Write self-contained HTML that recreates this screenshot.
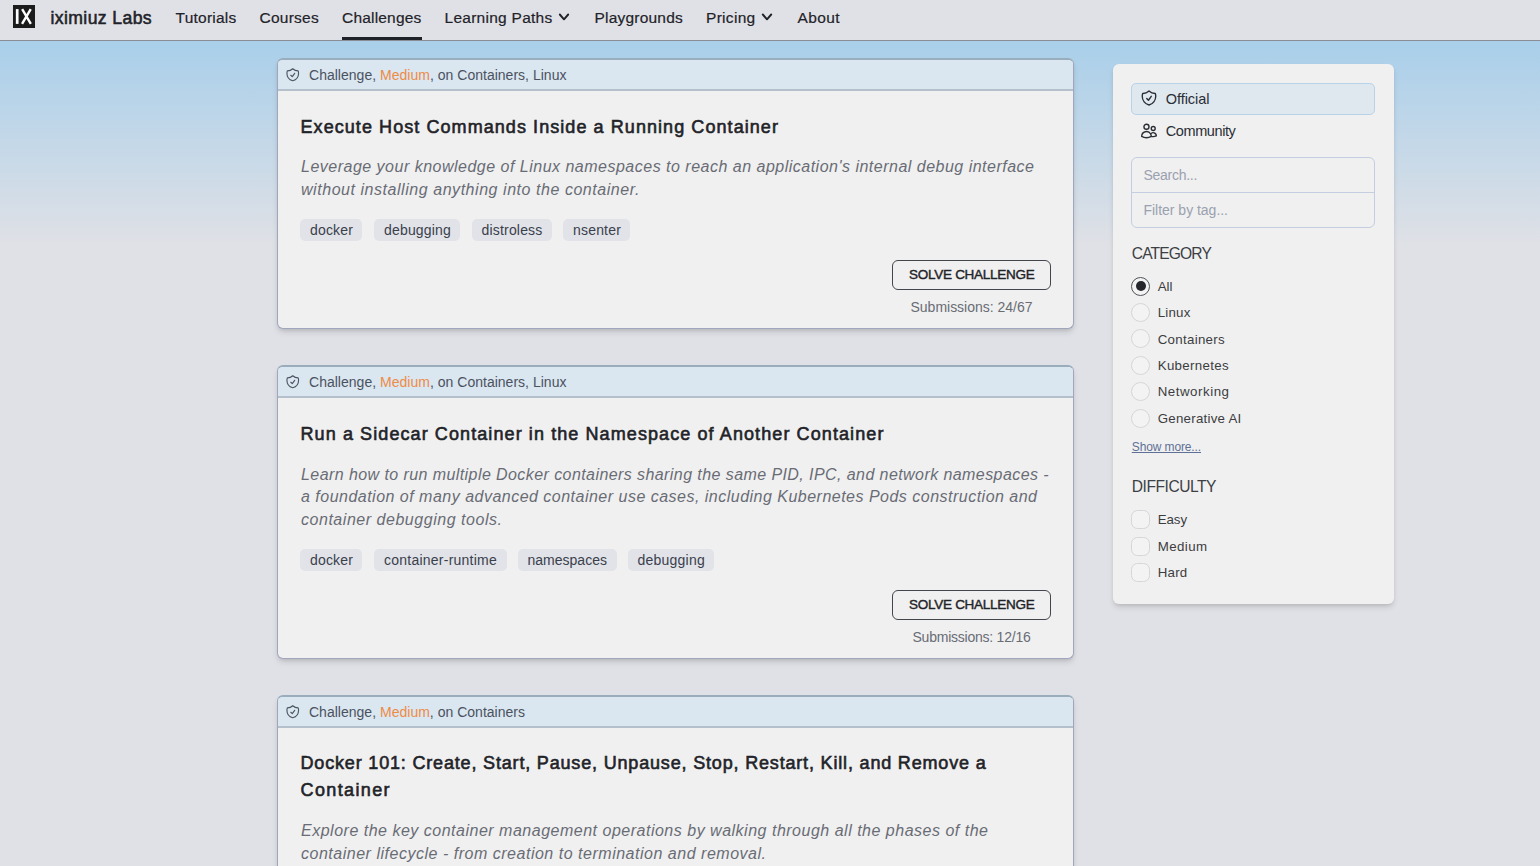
<!DOCTYPE html>
<html><head><meta charset="utf-8"><title>Challenges - iximiuz Labs</title>
<style>
html,body{margin:0;padding:0}
body{width:1540px;height:866px;overflow:hidden;position:relative;font-family:"Liberation Sans",sans-serif;
background:#e0e1e6;}
.bg{position:absolute;left:0;top:41px;width:1540px;height:207px;background:linear-gradient(to bottom,#a9cfea 0%,#e0e1e6 100%)}
.nav{position:absolute;left:0;top:0;width:1540px;height:40px;background:#e0e1e6;border-bottom:1px solid #8a8d94}
.t{position:absolute;white-space:nowrap;display:block}
.logo{position:absolute;left:13px;top:6px;width:22px;height:22px;background:#1c1c1c}
.ul{position:absolute;left:342px;top:37px;width:80px;height:3px;background:#1f2329}
.card{position:absolute;box-sizing:border-box;left:277px;width:797px;border:1px solid #a0a6bc;border-top:2px solid #9aadbd;border-radius:6px;background:#f0f0f0;box-shadow:0 4px 6px -1px rgba(0,0,0,.13),0 2px 4px -2px rgba(0,0,0,.13);overflow:hidden}
.card .hd{position:absolute;left:0;top:0;width:100%;height:29px;background:#dae6f0;border-bottom:2px solid #b4c0cb}
.tag{position:absolute;height:22.500px;background:#e1e3e9;border-radius:5px}
.btn{position:absolute;left:892px;width:157px;height:28px;border:1px solid #43464d;border-radius:6px;background:#f0f0f0}
.side{position:absolute;left:1113px;top:64px;width:280.500px;height:540px;background:#f0f0f0;border-radius:6px;box-shadow:0 4px 6px -1px rgba(0,0,0,.13),0 2px 4px -2px rgba(0,0,0,.13)}
.off{position:absolute;left:1131px;top:83px;width:242px;height:30px;background:#dfe7ef;border:1px solid #b7d3ea;border-radius:5px}
.sb{position:absolute;left:1131px;top:157px;width:242px;height:69px;border:1px solid #c4cee0;border-radius:6px}
.sb i{position:absolute;left:0;top:34px;width:100%;height:1px;background:#c4cee0}
.rd{position:absolute;left:1131px;width:17px;height:17px;border:1px solid #d5d6d9;border-radius:50%;background:#f3f3f4}
.rd.on{border-color:#505358}
.rd.on:after{content:"";position:absolute;left:3.500px;top:3.500px;width:10px;height:10px;border-radius:50%;background:#25272c}
.cb{position:absolute;left:1131px;width:17px;height:17px;border:1px solid #d5d6d9;border-radius:6.500px;background:#f3f3f4}
svg{position:absolute;overflow:visible}
</style></head><body>
<div class="bg"></div><div class="nav"></div><div class="ul"></div>
<svg style="left:13px;top:5px" width="22" height="23" viewBox="0 0 22 23"><rect width="22" height="23" fill="#1b1b1b"/><rect x="2.850" y="4.100" width="2.700" height="14.800" fill="#fff"/><path d="M9.150 4.100L17.850 18.900M17.750 4.100L9.050 18.900" stroke="#fff" stroke-width="2.400" fill="none"/></svg>
<svg style="left:557.6px;top:12.9px" width="12" height="8" viewBox="0 0 12 8"><path d="M1.800 1.500L6 6.300l4.200-4.800" fill="none" stroke="#1f2329" stroke-width="1.900" stroke-linecap="round" stroke-linejoin="round"/></svg>
<svg style="left:761.2px;top:12.9px" width="12" height="8" viewBox="0 0 12 8"><path d="M1.800 1.500L6 6.300l4.200-4.800" fill="none" stroke="#1f2329" stroke-width="1.900" stroke-linecap="round" stroke-linejoin="round"/></svg>
<div class="card" style="top:58px;height:271px"><div class="hd"></div></div>
<svg style="left:285.2px;top:67.2px" width="15.5" height="15.5" viewBox="0 0 24 24"><path d="M9 12.750L11.250 15 15 9.750m-3-7.036A11.959 11.959 0 013.598 6 11.990 11.990 0 003 9.749c0 5.592 3.824 10.290 9 11.623 5.176-1.332 9-6.030 9-11.622 0-1.310-.210-2.571-.598-3.751h-.152c-3.196 0-6.100-1.248-8.250-3.285z" fill="none" stroke="#4b5361" stroke-width="1.75" stroke-linecap="round" stroke-linejoin="round"/></svg>
<div class="card" style="top:365px;height:294px"><div class="hd"></div></div>
<svg style="left:285.2px;top:374.2px" width="15.5" height="15.5" viewBox="0 0 24 24"><path d="M9 12.750L11.250 15 15 9.750m-3-7.036A11.959 11.959 0 013.598 6 11.990 11.990 0 003 9.749c0 5.592 3.824 10.290 9 11.623 5.176-1.332 9-6.030 9-11.622 0-1.310-.210-2.571-.598-3.751h-.152c-3.196 0-6.100-1.248-8.250-3.285z" fill="none" stroke="#4b5361" stroke-width="1.75" stroke-linecap="round" stroke-linejoin="round"/></svg>
<div class="card" style="top:695px;height:200px"><div class="hd"></div></div>
<svg style="left:285.2px;top:704.2px" width="15.5" height="15.5" viewBox="0 0 24 24"><path d="M9 12.750L11.250 15 15 9.750m-3-7.036A11.959 11.959 0 013.598 6 11.990 11.990 0 003 9.749c0 5.592 3.824 10.290 9 11.623 5.176-1.332 9-6.030 9-11.622 0-1.310-.210-2.571-.598-3.751h-.152c-3.196 0-6.100-1.248-8.250-3.285z" fill="none" stroke="#4b5361" stroke-width="1.75" stroke-linecap="round" stroke-linejoin="round"/></svg>
<div class="tag" style="left:300px;top:218.5px;width:62px"></div>
<div class="tag" style="left:374px;top:218.5px;width:86px"></div>
<div class="tag" style="left:472px;top:218.5px;width:79.5px"></div>
<div class="tag" style="left:563px;top:218.5px;width:67px"></div>
<div class="tag" style="left:300px;top:548.5px;width:62px"></div>
<div class="tag" style="left:374px;top:548.5px;width:132.5px"></div>
<div class="tag" style="left:518px;top:548.5px;width:98.5px"></div>
<div class="tag" style="left:627.5px;top:548.5px;width:86.5px"></div>
<div class="btn" style="top:260px"></div><div class="btn" style="top:590px"></div>
<div class="side"></div><div class="off"></div><div class="sb"><i></i></div>
<svg style="left:1139.6px;top:89.3px" width="18" height="18" viewBox="0 0 24 24"><path d="M9 12.750L11.250 15 15 9.750m-3-7.036A11.959 11.959 0 013.598 6 11.990 11.990 0 003 9.749c0 5.592 3.824 10.290 9 11.623 5.176-1.332 9-6.030 9-11.622 0-1.310-.210-2.571-.598-3.751h-.152c-3.196 0-6.100-1.248-8.250-3.285z" fill="none" stroke="#2a2e35" stroke-width="1.85" stroke-linecap="round" stroke-linejoin="round"/></svg>
<svg style="left:1139.700px;top:122.100px" width="18" height="18" viewBox="0 0 24 24" fill="none" stroke="#2a2e35" stroke-width="1.850" stroke-linecap="round" stroke-linejoin="round"><path d="M15 19.128a9.380 9.380 0 002.625.372 9.337 9.337 0 004.121-.952 4.125 4.125 0 00-7.533-2.493M15 19.128v-.003c0-1.113-.285-2.160-.786-3.070M15 19.128v.106A12.318 12.318 0 018.624 21c-2.331 0-4.512-.645-6.374-1.766l-.001-.109a6.375 6.375 0 0111.964-3.070M12 6.375a3.375 3.375 0 11-6.750 0 3.375 3.375 0 016.750 0zm8.250 2.250a2.625 2.625 0 11-5.250 0 2.625 2.625 0 015.250 0z"/></svg>
<div class="rd on" style="top:276.5px"></div>
<div class="rd" style="top:302.9px"></div>
<div class="rd" style="top:329.3px"></div>
<div class="rd" style="top:355.7px"></div>
<div class="rd" style="top:382.1px"></div>
<div class="rd" style="top:408.5px"></div>
<div class="cb" style="top:510.0px"></div>
<div class="cb" style="top:536.5px"></div>
<div class="cb" style="top:562.9px"></div>
<span class="t" style="left:50.5px;top:6.00px;font-size:17.6px;line-height:25px;color:#1f2329;font-weight:400;font-style:normal;letter-spacing:0.391px;-webkit-text-stroke:0.550px #1f2329;">iximiuz Labs</span>
<span class="t" style="left:175.5px;top:6.50px;font-size:15.5px;line-height:22px;color:#1f2329;font-weight:400;font-style:normal;letter-spacing:0.238px;-webkit-text-stroke:0.200px #1f2329;">Tutorials</span>
<span class="t" style="left:259.5px;top:6.50px;font-size:15.5px;line-height:22px;color:#1f2329;font-weight:400;font-style:normal;letter-spacing:0.254px;-webkit-text-stroke:0.200px #1f2329;">Courses</span>
<span class="t" style="left:342px;top:6.50px;font-size:15.5px;line-height:22px;color:#1f2329;font-weight:400;font-style:normal;letter-spacing:0.194px;-webkit-text-stroke:0.200px #1f2329;">Challenges</span>
<span class="t" style="left:444.5px;top:6.50px;font-size:15.5px;line-height:22px;color:#1f2329;font-weight:400;font-style:normal;letter-spacing:0.266px;-webkit-text-stroke:0.200px #1f2329;">Learning Paths</span>
<span class="t" style="left:594.5px;top:6.50px;font-size:15.5px;line-height:22px;color:#1f2329;font-weight:400;font-style:normal;letter-spacing:0.212px;-webkit-text-stroke:0.200px #1f2329;">Playgrounds</span>
<span class="t" style="left:706px;top:6.50px;font-size:15.5px;line-height:22px;color:#1f2329;font-weight:400;font-style:normal;letter-spacing:0.301px;-webkit-text-stroke:0.200px #1f2329;">Pricing</span>
<span class="t" style="left:797.5px;top:6.50px;font-size:15.5px;line-height:22px;color:#1f2329;font-weight:400;font-style:normal;letter-spacing:0.397px;-webkit-text-stroke:0.200px #1f2329;">About</span>
<span class="t" style="left:309px;top:65.00px;font-size:14px;line-height:20px;color:#4a5260;font-weight:400;font-style:normal;letter-spacing:0.017px;">Challenge, <span style="color:#ee8b45">Medium</span>, on Containers, Linux</span>
<span class="t" style="left:309px;top:372.00px;font-size:14px;line-height:20px;color:#4a5260;font-weight:400;font-style:normal;letter-spacing:0.017px;">Challenge, <span style="color:#ee8b45">Medium</span>, on Containers, Linux</span>
<span class="t" style="left:309px;top:702.00px;font-size:14px;line-height:20px;color:#4a5260;font-weight:400;font-style:normal;letter-spacing:0.013px;">Challenge, <span style="color:#ee8b45">Medium</span>, on Containers</span>
<span class="t" style="left:300.5px;top:114.50px;font-size:18px;line-height:25px;color:#1f2328;font-weight:400;font-style:normal;letter-spacing:1.068px;-webkit-text-stroke:0.600px #1f2328;">Execute Host Commands Inside a Running Container</span>
<span class="t" style="left:301.0px;top:156.00px;font-size:16px;line-height:22px;color:#696c75;font-weight:400;font-style:italic;letter-spacing:0.494px;">Leverage your knowledge of Linux namespaces to reach an application's internal debug interface</span>
<span class="t" style="left:301.0px;top:178.50px;font-size:16px;line-height:22px;color:#696c75;font-weight:400;font-style:italic;letter-spacing:0.545px;">without installing anything into the container.</span>
<span class="t" style="left:310px;top:220.00px;font-size:14px;line-height:20px;color:#3a404b;font-weight:400;font-style:normal;letter-spacing:0.161px;">docker</span>
<span class="t" style="left:384px;top:220.00px;font-size:14px;line-height:20px;color:#3a404b;font-weight:400;font-style:normal;letter-spacing:0.177px;">debugging</span>
<span class="t" style="left:481.5px;top:220.00px;font-size:14px;line-height:20px;color:#3a404b;font-weight:400;font-style:normal;letter-spacing:0.186px;">distroless</span>
<span class="t" style="left:573px;top:220.00px;font-size:14px;line-height:20px;color:#3a404b;font-weight:400;font-style:normal;letter-spacing:0.185px;">nsenter</span>
<span class="t" style="left:909px;top:265.00px;font-size:13.5px;line-height:19px;color:#1f2328;font-weight:400;font-style:normal;letter-spacing:-0.271px;-webkit-text-stroke:0.400px #1f2328;">SOLVE CHALLENGE</span>
<span class="t" style="left:910.5px;top:297.00px;font-size:14px;line-height:20px;color:#696c75;font-weight:400;font-style:normal;letter-spacing:-0.010px;">Submissions: 24/67</span>
<span class="t" style="left:300.5px;top:421.80px;font-size:18px;line-height:25px;color:#1f2328;font-weight:400;font-style:normal;letter-spacing:1.093px;-webkit-text-stroke:0.600px #1f2328;">Run a Sidecar Container in the Namespace of Another Container</span>
<span class="t" style="left:301.0px;top:463.50px;font-size:16px;line-height:22px;color:#696c75;font-weight:400;font-style:italic;letter-spacing:0.422px;">Learn how to run multiple Docker containers sharing the same PID, IPC, and network namespaces -</span>
<span class="t" style="left:301.0px;top:486.00px;font-size:16px;line-height:22px;color:#696c75;font-weight:400;font-style:italic;letter-spacing:0.488px;">a foundation of many advanced container use cases, including Kubernetes Pods construction and</span>
<span class="t" style="left:301.0px;top:508.50px;font-size:16px;line-height:22px;color:#696c75;font-weight:400;font-style:italic;letter-spacing:0.531px;">container debugging tools.</span>
<span class="t" style="left:310px;top:550.00px;font-size:14px;line-height:20px;color:#3a404b;font-weight:400;font-style:normal;letter-spacing:0.161px;">docker</span>
<span class="t" style="left:384px;top:550.00px;font-size:14px;line-height:20px;color:#3a404b;font-weight:400;font-style:normal;letter-spacing:0.239px;">container-runtime</span>
<span class="t" style="left:527.5px;top:550.00px;font-size:14px;line-height:20px;color:#3a404b;font-weight:400;font-style:normal;letter-spacing:0.011px;">namespaces</span>
<span class="t" style="left:637.5px;top:550.00px;font-size:14px;line-height:20px;color:#3a404b;font-weight:400;font-style:normal;letter-spacing:0.233px;">debugging</span>
<span class="t" style="left:909px;top:595.00px;font-size:13.5px;line-height:19px;color:#1f2328;font-weight:400;font-style:normal;letter-spacing:-0.271px;-webkit-text-stroke:0.400px #1f2328;">SOLVE CHALLENGE</span>
<span class="t" style="left:912.5px;top:627.00px;font-size:14px;line-height:20px;color:#696c75;font-weight:400;font-style:normal;letter-spacing:-0.233px;">Submissions: 12/16</span>
<span class="t" style="left:300.5px;top:751.40px;font-size:18px;line-height:25px;color:#1f2328;font-weight:400;font-style:normal;letter-spacing:0.825px;-webkit-text-stroke:0.600px #1f2328;">Docker 101: Create, Start, Pause, Unpause, Stop, Restart, Kill, and Remove a</span>
<span class="t" style="left:300.5px;top:778.30px;font-size:18px;line-height:25px;color:#1f2328;font-weight:400;font-style:normal;letter-spacing:1.384px;-webkit-text-stroke:0.600px #1f2328;">Container</span>
<span class="t" style="left:301.0px;top:820.00px;font-size:16px;line-height:22px;color:#696c75;font-weight:400;font-style:italic;letter-spacing:0.505px;">Explore the key container management operations by walking through all the phases of the</span>
<span class="t" style="left:301.0px;top:842.50px;font-size:16px;line-height:22px;color:#696c75;font-weight:400;font-style:italic;letter-spacing:0.515px;">container lifecycle - from creation to termination and removal.</span>
<span class="t" style="left:1165.7px;top:88.50px;font-size:14.5px;line-height:20px;color:#2a2e35;font-weight:400;font-style:normal;letter-spacing:-0.033px;">Official</span>
<span class="t" style="left:1165.7px;top:120.70px;font-size:14.5px;line-height:20px;color:#2a2e35;font-weight:400;font-style:normal;letter-spacing:-0.392px;">Community</span>
<span class="t" style="left:1143.5px;top:164.70px;font-size:14px;line-height:20px;color:#9aa1af;font-weight:400;font-style:normal;letter-spacing:-0.281px;">Search...</span>
<span class="t" style="left:1143.5px;top:200.00px;font-size:14px;line-height:20px;color:#9aa1af;font-weight:400;font-style:normal;letter-spacing:-0.020px;">Filter by tag...</span>
<span class="t" style="left:1131.8px;top:243.10px;font-size:15.6px;line-height:22px;color:#3c3f45;font-weight:400;font-style:normal;letter-spacing:-0.860px;">CATEGORY</span>
<span class="t" style="left:1157.7px;top:276.70px;font-size:13.3px;line-height:19px;color:#3c3d40;font-weight:400;font-style:normal;letter-spacing:0.006px;">All</span>
<span class="t" style="left:1157.7px;top:303.10px;font-size:13.3px;line-height:19px;color:#3c3d40;font-weight:400;font-style:normal;letter-spacing:0.201px;">Linux</span>
<span class="t" style="left:1157.7px;top:329.50px;font-size:13.3px;line-height:19px;color:#3c3d40;font-weight:400;font-style:normal;letter-spacing:0.299px;">Containers</span>
<span class="t" style="left:1157.7px;top:355.90px;font-size:13.3px;line-height:19px;color:#3c3d40;font-weight:400;font-style:normal;letter-spacing:0.328px;">Kubernetes</span>
<span class="t" style="left:1157.7px;top:382.30px;font-size:13.3px;line-height:19px;color:#3c3d40;font-weight:400;font-style:normal;letter-spacing:0.528px;">Networking</span>
<span class="t" style="left:1157.7px;top:408.70px;font-size:13.3px;line-height:19px;color:#3c3d40;font-weight:400;font-style:normal;letter-spacing:0.248px;">Generative AI</span>
<span class="t" style="left:1131.8px;top:438.80px;font-size:12px;line-height:17px;color:#5f7097;font-weight:400;font-style:normal;letter-spacing:-0.125px;text-decoration:underline;">Show more...</span>
<span class="t" style="left:1131.8px;top:476.35px;font-size:15.6px;line-height:22px;color:#3c3f45;font-weight:400;font-style:normal;letter-spacing:-0.475px;">DIFFICULTY</span>
<span class="t" style="left:1157.7px;top:510.20px;font-size:13.3px;line-height:19px;color:#3c3d40;font-weight:400;font-style:normal;letter-spacing:-0.066px;">Easy</span>
<span class="t" style="left:1157.7px;top:536.50px;font-size:13.3px;line-height:19px;color:#3c3d40;font-weight:400;font-style:normal;letter-spacing:0.417px;">Medium</span>
<span class="t" style="left:1157.7px;top:562.60px;font-size:13.3px;line-height:19px;color:#3c3d40;font-weight:400;font-style:normal;letter-spacing:0.243px;">Hard</span>
</body></html>
